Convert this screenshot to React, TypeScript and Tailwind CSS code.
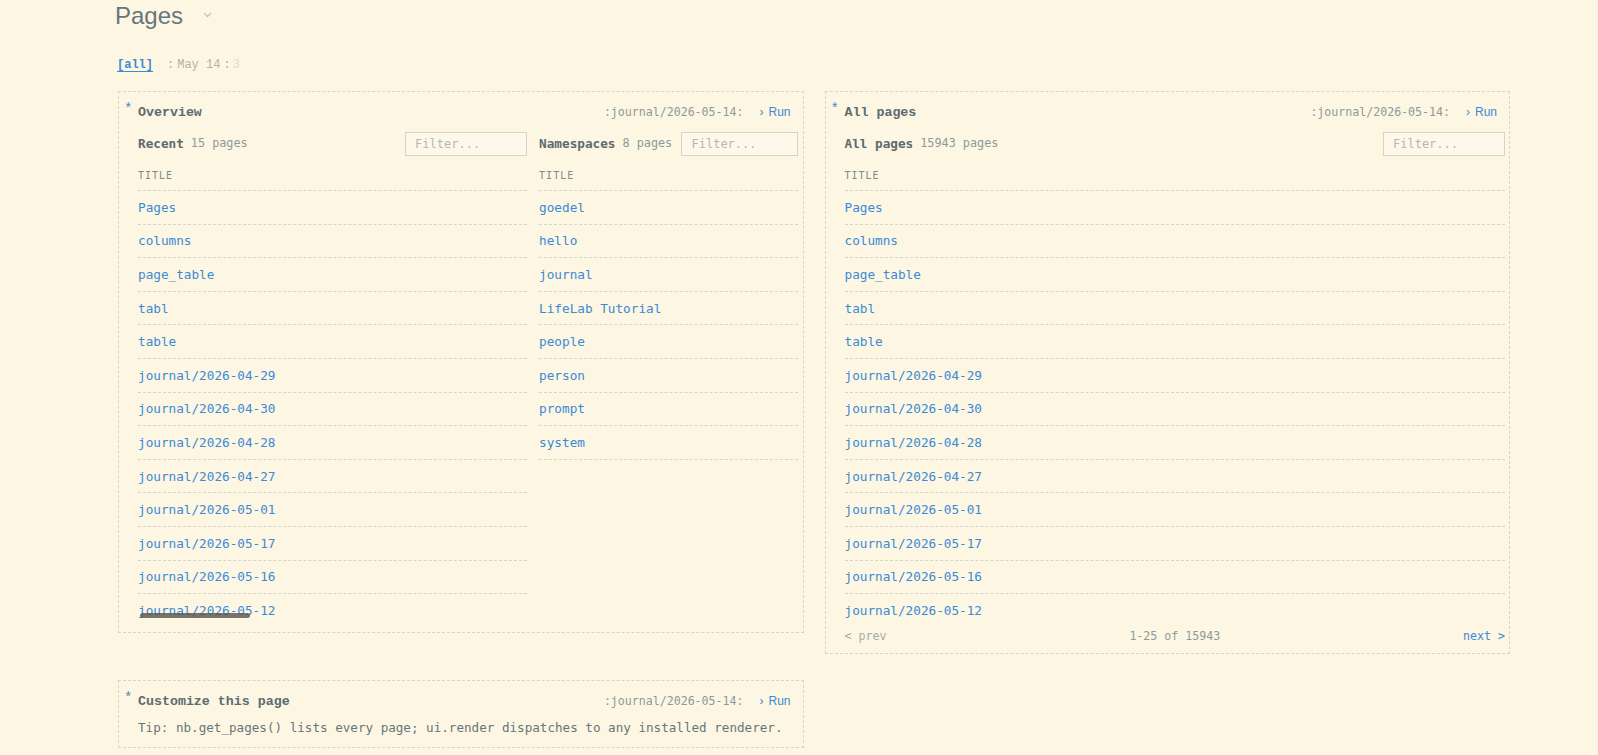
import React from "react";

const recent = [
  "Pages",
  "columns",
  "page_table",
  "tabl",
  "table",
  "journal/2026-04-29",
  "journal/2026-04-30",
  "journal/2026-04-28",
  "journal/2026-04-27",
  "journal/2026-05-01",
  "journal/2026-05-17",
  "journal/2026-05-16",
  "journal/2026-05-12",
];

const namespaces = ["goedel", "hello", "journal", "LifeLab Tutorial", "people", "person", "prompt", "system"];

const mono = "font-['DejaVu_Sans_Mono',monospace]";
const courier = "font-['Liberation_Mono',monospace]";

const Star = () => (
  <span className={`absolute left-[5px] top-[10px] text-[14px] leading-none text-[#3a8ad6] ${courier}`}>*</span>
);

const CellHeader = ({ title }: { title: string }) => (
  <div className="flex h-[26px] items-start justify-between pr-[8px]">
    <span className={`text-[13.3px] font-bold leading-[21px] text-[#5b6b70] ${courier}`}>{title}</span>
    <span className="flex items-center leading-[21px]">
      <span className={`text-[11.6px] text-[#8e9a99] ${mono}`}>:journal/2026-05-14:</span>
      <span className="ml-[16px] text-[12px] text-[#3a8ad6] font-['Liberation_Sans',sans-serif]">
        <span className="mr-[5px]">›</span>Run
      </span>
    </span>
  </div>
);

const Filter = ({ w }: { w: string }) => (
  <input
    placeholder="Filter..."
    className={`${w} ml-auto h-[24px] border border-[#d6d4c6] bg-[#fdf8ea] pl-[9px] text-[12px] text-[#586e75] placeholder:text-[#b5b8ad] outline-none ${mono}`}
  />
);

const Section = ({ label, count, filterW }: { label: string; count: string; filterW: string }) => (
  <div className="flex h-[24px] items-center">
    <span className={`text-[12.7px] font-bold text-[#5b6b70] ${mono}`}>{label}</span>
    <span className={`ml-[7px] text-[11.8px] text-[#8e9a99] ${mono}`}>{count}</span>
    <Filter w={filterW} />
  </div>
);

const Table = ({ rows, scrollbar }: { rows: string[]; scrollbar?: boolean }) => (
  <div>
    <div className="flex h-[35px] items-end border-b border-dashed border-[#d3d6c8] pb-[8px]">
      <span className={`text-[10px] leading-[13px] tracking-[1px] text-[#7f8b8a] ${mono}`}>TITLE</span>
    </div>
    <div className="relative h-[430px] overflow-hidden">
      {rows.map((r) => (
        <div
          key={r}
          className={`flex h-[33.6px] items-center border-b border-dashed border-[#d3d6c8] text-[12.7px] text-[#3a8ad6] ${mono}`}
        >
          {r}
        </div>
      ))}
      {scrollbar && (
        <div className="absolute bottom-[3px] left-[2px] h-[5px] w-[110px] rounded-full bg-[#55554c]/80" />
      )}
    </div>
  </div>
);

export default function App() {
  return (
    <div className="min-h-screen w-full bg-[#fdf6e3] pl-[118px]">
      <div className="w-[1392px]">
        <div className="-ml-[3px] flex h-[32px] items-center">
          <h1 className="text-[24px] font-['Liberation_Sans',sans-serif] text-[#66777b]">Pages</h1>
          <svg className="ml-[20px] mt-[-2px]" width="9" height="6" viewBox="0 0 9 6">
            <path d="M1 1l3.5 3.5L8 1" fill="none" stroke="#bfc6bf" strokeWidth="1.3" />
          </svg>
        </div>

        <div className={`mt-[25px] flex h-[16px] items-center text-[12px] ${courier}`}>
          <span className="-ml-[1px] font-bold text-[#3a8ad6] underline underline-offset-[3px]">[all]</span>
          <span className="ml-[14px] text-[#b1b4a9]">:</span>
          <span className="ml-[3px] text-[#b1b4a9]">May 14</span>
          <span className="ml-[3px] text-[#b1b4a9]">:</span>
          <span className="ml-[2px] text-[#dcdccf]">3</span>
        </div>

        <div className="mt-[18px] grid grid-cols-2 items-start gap-x-[21px] gap-y-[26px]">
          <div className="relative border border-dashed border-[#d3d6c8] pb-[11px] pl-[19px] pr-[4px] pt-[10px]">
            <Star />
            <CellHeader title="Overview" />
            <div className="mt-[4px] grid grid-cols-[3fr_2fr] gap-x-[12px]">
              <div>
                <Section label="Recent" count="15 pages" filterW="w-[122px]" />
                <Table rows={recent} scrollbar />
              </div>
              <div>
                <Section label="Namespaces" count="8 pages" filterW="w-[117px]" />
                <Table rows={namespaces} />
              </div>
            </div>
          </div>

          <div className="relative border border-dashed border-[#d3d6c8] pb-[6px] pl-[19px] pr-[4px] pt-[10px]">
            <Star />
            <CellHeader title="All pages" />
            <div className="mt-[4px]">
              <Section label="All pages" count="15943 pages" filterW="w-[122px]" />
              <Table rows={recent} />
            </div>
            <div className={`mt-[6px] flex h-[20px] items-center justify-between text-[11.6px] ${mono}`}>
              <span className="text-[#a3aca9]">&lt; prev</span>
              <span className="text-[#8e9a99]">1-25 of 15943</span>
              <span className="text-[#3a8ad6]">next &gt;</span>
            </div>
          </div>

          <div className="relative border border-dashed border-[#d3d6c8] pb-[9px] pl-[19px] pr-[4px] pt-[10px]">
            <Star />
            <CellHeader title="Customize this page" />
            <div className={`mt-[1px] flex h-[20px] items-center text-[12.6px] text-[#66777b] ${mono}`}>
              Tip: nb.get_pages() lists every page; ui.render dispatches to any installed renderer.
            </div>
          </div>
        </div>
      </div>
    </div>
  );
}
